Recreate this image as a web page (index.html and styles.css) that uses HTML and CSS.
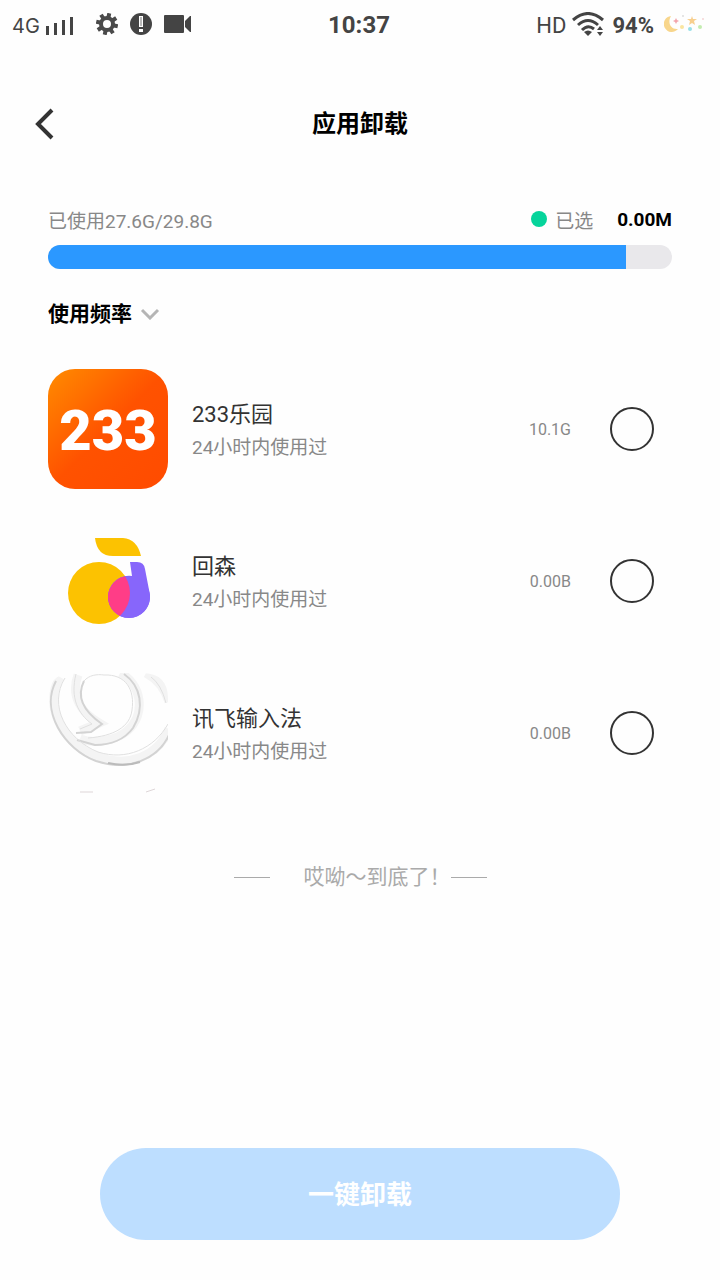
FILE: index.html
```html
<!DOCTYPE html>
<html lang="zh-CN">
<head>
    <meta charset="UTF-8">
    <meta name="viewport" content="width=device-width, initial-scale=1.0">
    <title>应用卸载</title>
    <link rel="stylesheet" href="styles.css">
</head>
<body>
<!-- Status bar -->
<div class="status-bar">
    <div class="status-left">
        <span class="network">4G</span>
        <svg class="signal" width="28" height="20" viewBox="0 0 28 20" fill="#444">
            <rect x="0" y="10" width="3" height="9"/>
            <rect x="8" y="7" width="3" height="12"/>
            <rect x="16" y="4" width="3" height="15"/>
            <rect x="24" y="1" width="3" height="18"/>
        </svg>
        <svg class="gear" width="22" height="22" viewBox="0 0 22 22">
            <g stroke="#4a4a4a" stroke-width="4">
                <path d="M11 0v5M11 17v5M0 11h5M17 11h5" transform="rotate(12 11 11)"/>
                <path d="M11 0v5M11 17v5M0 11h5M17 11h5" transform="rotate(57 11 11)"/>
            </g>
            <circle cx="11" cy="11" r="6" fill="none" stroke="#4a4a4a" stroke-width="4"/>
        </svg>
        <svg class="alert" width="22" height="22" viewBox="0 0 22 22">
            <circle cx="11" cy="11" r="11" fill="#444"/>
            <path d="M9 3h4v11H9zM9 16h4v3H9z" fill="#fff"/>
            <path d="M11 4v9" stroke="#777" stroke-width="1"/>
        </svg>
        <svg class="camera" width="27" height="18" viewBox="0 0 27 18" fill="#444">
            <rect x="0" y="0" width="20" height="18" rx="1"/>
            <path d="M21 6l5-5h1v16h-1l-5-5z"/>
        </svg>
    </div>
    <div class="status-time">10:37</div>
    <div class="status-right">
        <span class="hd">HD</span>
        <svg class="wifi" width="32" height="24" viewBox="0 0 32 24">
            <g fill="none" stroke="#444" stroke-width="3">
                <path d="M1 8Q16 -5 31 8"/>
                <path d="M6 13Q16 4 26 13"/>
                <path d="M10 18Q16 12 22 17"/>
            </g>
            <path d="M12 20q4-3 8 0l-4 4z" fill="#444"/>
            <path d="M28 14l3 4h-6zM28 24l-3-4h6z" fill="#444"/>
        </svg>
        <span class="battery">94%</span>
        <svg class="moon" width="42" height="18" viewBox="0 0 42 18">
            <path d="M7 1a8 8 0 1 0 7 13C7 15 3 8 7 1z" fill="#f8d68c"/>
            <path d="M12 3l1 2 2 1-2 1-1 2-1-2-2-1 2-1z" fill="#f3a5ad"/>
            <path d="M28 1l1 3h4l-3 2 1 4-3-2-3 2 1-4-3-2h4z" fill="#f8cf8e"/>
            <circle cx="18" cy="12" r="2" fill="#fae5a0"/>
            <circle cx="26" cy="14" r="2" fill="#98e0e8"/>
            <circle cx="36" cy="12" r="2" fill="#c3edb0"/>
            <circle cx="19" cy="1" r="1" fill="#ddd"/>
            <circle cx="39" cy="4" r="1" fill="#f5d5d5"/>
        </svg>
    </div>
</div>

<header class="header">
    <button type="button" class="back" aria-label="返回">
        <svg width="20" height="32" viewBox="0 0 20 32">
            <path d="M18 2L4 16l14 14" fill="none" stroke="#333" stroke-width="4"/>
        </svg>
    </button>
    <h1>应用卸载</h1>
</header>

<main>
    <!-- Storage usage -->
    <div class="usage">
        <span>已使用27.6G/29.8G</span>
        <span class="dot"></span>
        <span class="selected-label">已选</span>
        <strong>0.00M</strong>
    </div>
    <div class="bar">
        <div class="bar-fill" style="width: 92.6%"></div>
    </div>

    <div class="sort">
        <select aria-label="排序">
            <option>使用频率</option>
        </select>
        <svg width="20" height="12" viewBox="0 0 20 12">
            <path d="M2 2l8 8 8-8" fill="none" stroke="#b5b5b5" stroke-width="3"/>
        </svg>
    </div>

    <!-- App list -->
    <ul class="apps">
        <li class="app">
            <svg class="icon" viewBox="0 0 120 120">
                <defs>
                    <linearGradient id="orange" x1="0" y1="0" x2="1" y2="1">
                        <stop offset="0" stop-color="#ff8c00"/>
                        <stop offset="0.5" stop-color="#ff5200"/>
                        <stop offset="1" stop-color="#ff4b00"/>
                    </linearGradient>
                </defs>
                <rect width="120" height="120" rx="27" fill="url(#orange)"/>
                <text class="logo-text" x="60" y="81" text-anchor="middle">233</text>
            </svg>
            <label class="info" for="app1">
                <span class="name">233乐园</span>
                <span class="used">24小时内使用过</span>
            </label>
            <span class="size">10.1G</span>
            <input type="checkbox" id="app1">
        </li>
        <li class="app">
            <svg class="icon" viewBox="0 0 120 120">
                <defs>
                    <clipPath id="yellowClip"><circle cx="51" cy="72" r="31"/></clipPath>
                </defs>
                <path d="M47 17h28q14 1 18 18H65Q49 35 47 17z" fill="#fcc201"/>
                <circle cx="51" cy="72" r="31" fill="#fcc201"/>
                <path d="M82 41h7q7 0 8 7l5 26a21 21 0 1 1-18-19z" fill="#8766fb"/>
                <circle cx="81" cy="76" r="21" fill="#8766fb"/>
                <circle cx="81" cy="76" r="21" fill="#ff3d87" clip-path="url(#yellowClip)"/>
            </svg>
            <label class="info" for="app2">
                <span class="name">回森</span>
                <span class="used">24小时内使用过</span>
            </label>
            <span class="size">0.00B</span>
            <input type="checkbox" id="app2">
        </li>
        <li class="app">
            <svg class="icon" viewBox="0 0 120 120">
                <defs>
                    <clipPath id="tile"><path d="M26 0h68q26 0 26 26v94H0V26Q0 0 26 0z"/></clipPath>
                </defs>
                <g clip-path="url(#tile)" fill="none">
                    <g stroke="#f4f4f4" stroke-width="9">
                        <path d="M12 4C-6 34 17 72 48 83c32 13 62 0 73-27"/>
                        <path d="M30 2C22 24 34 40 51 50L32 58M32 66c16 6 38 0 47-8 20-17 14-48-7-58"/>
                        <path d="M98 0q17 9 23 29"/>
                    </g>
                    <g stroke="#d3d3d3" stroke-width="2">
                        <path d="M8 8C-8 38 16 76 48 88c32 11 62-2 73-26"/>
                        <path d="M36 8C27 26 38 40 54 51L43 59l-15 1M29 67l18 5c16 0 30-6 38-17 12-20 8-42-9-54"/>
                    </g>
                    <g stroke="#e0e0e0" stroke-width="1">
                        <path d="M17 5C0 32 18 66 50 79c28 9 56-3 70-28"/>
                        <path d="M28 1c-6 24 2 40 16 50l-12 5M36 8C41 2 49 1 56 2 78 1 87 17 84 37c-2 17-18 26-44 28"/>
                        <path d="M103 4q10 7 15 26"/>
                    </g>
                    <path d="M60 90q17 4 32-1" stroke="#bbb" stroke-width="2"/>
                    <path d="M32 119h13M98 119l9-3" stroke="#ded6d8" stroke-width="1"/>
                </g>
            </svg>
            <label class="info" for="app3">
                <span class="name">讯飞输入法</span>
                <span class="used">24小时内使用过</span>
            </label>
            <span class="size">0.00B</span>
            <input type="checkbox" id="app3">
        </li>
    </ul>

    <p class="end">哎呦～到底了！</p>
</main>

<footer>
    <button type="button" class="uninstall">一键卸载</button>
</footer>
</body>
</html>
```

FILE: styles.css
```css
* { box-sizing: border-box; }
body {
    display: flex;
    flex-direction: column;
    min-height: 100vh;
    margin: 0;
    background-color: #fefefe;
    color: #333;
    font-family: Roboto, "Noto Sans CJK SC", sans-serif;
}
svg {
    display: block;
    flex: none;
}
button {
    border: none;
    font-family: inherit;
    cursor: pointer;
}

/* Status bar */
.status-bar {
    display: grid;
    grid-template-columns: 1fr auto 1fr;
    align-items: center;
    height: 48px;
    padding: 0 14px 0 12px;
    color: #444;
}
.status-left,
.status-right {
    display: flex;
    align-items: center;
}
.status-right {
    justify-content: flex-end;
}
.network {
    padding-top: 4px;
    font-family: Inter, sans-serif;
    font-size: 20px;
}
.signal {
    margin: 4px 22px 0 6px;
}
.alert {
    margin: 0 12px;
}
.status-time {
    padding-top: 2px;
    font-size: 24px;
    font-weight: bold;
}
.hd {
    padding-top: 2px;
    font-size: 22px;
}
.wifi {
    margin: 0 8px 0 6px;
}
.battery {
    padding-top: 2px;
    font-size: 22px;
    font-weight: bold;
}
.moon {
    margin-left: 10px;
}

/* Title row */
.header {
    display: grid;
    grid-template-columns: 1fr auto 1fr;
    align-items: center;
    height: 96px;
    margin-top: 28px;
    padding: 0 34px;
}
.header h1 {
    margin: 0;
    padding-bottom: 6px;
    color: #000;
    font-size: 24px;
    font-weight: bold;
}
.back {
    justify-self: start;
    padding: 0;
    background: none;
}

main {
    flex: 1;
    padding: 0 48px;
}

/* Storage usage */
.usage {
    display: flex;
    align-items: center;
    height: 28px;
    margin-top: 33px;
    color: #888;
    font-size: 19px;
}
.dot {
    width: 16px;
    height: 16px;
    margin-left: auto;
    border-radius: 50%;
    background-color: #06d49b;
}
.selected-label {
    margin: 0 24px 0 8px;
}
.usage strong {
    color: #000;
}
.bar {
    height: 24px;
    margin-top: 12px;
    border-radius: 12px;
    background-color: #e9e8eb;
    overflow: hidden;
}
.bar-fill {
    height: 100%;
    background-color: #2b98ff;
}

/* Sort drop-down */
.sort {
    display: flex;
    align-items: center;
    gap: 8px;
    height: 32px;
    margin-top: 29px;
}
.sort select {
    appearance: none;
    padding: 0;
    border: none;
    background: none;
    color: #000;
    font-family: inherit;
    font-size: 21px;
    font-weight: bold;
}

/* App list */
.apps {
    display: flex;
    flex-direction: column;
    gap: 32px;
    margin: 39px 0 0;
    padding: 0;
    list-style: none;
}
.app {
    display: flex;
    align-items: center;
    padding-right: 18px;
}
.icon {
    width: 120px;
    height: 120px;
}
.logo-text {
    fill: #fff;
    font-size: 56px;
    font-weight: 900;
}
.info {
    flex: 1;
    margin-left: 24px;
    padding-top: 4px;
}
.name,
.used {
    display: block;
}
.name {
    font-size: 22px;
    line-height: 34px;
}
.used {
    color: #888;
    font-size: 19px;
    line-height: 32px;
}
.size {
    color: #888;
    font-size: 16px;
}
.app input {
    appearance: none;
    width: 44px;
    height: 44px;
    margin: 0 0 0 39px;
    border: 2px solid #333;
    border-radius: 50%;
}
.app input:checked {
    background-color: #06d49b;
}

/* End of list */
.end {
    display: flex;
    align-items: center;
    justify-content: center;
    margin: 68px 0 0;
    color: #aaa;
    font-size: 21px;
    line-height: 32px;
}
.end::before,
.end::after {
    content: "";
    width: 36px;
    height: 1px;
    background-color: #aaa;
}
.end::before {
    margin-right: 34px;
}

footer {
    padding: 40px 100px;
}
.uninstall {
    width: 100%;
    height: 92px;
    padding: 0 0 4px;
    border-radius: 46px;
    background-color: #bddeff;
    color: #fff;
    font-size: 26px;
    font-weight: bold;
}
```
